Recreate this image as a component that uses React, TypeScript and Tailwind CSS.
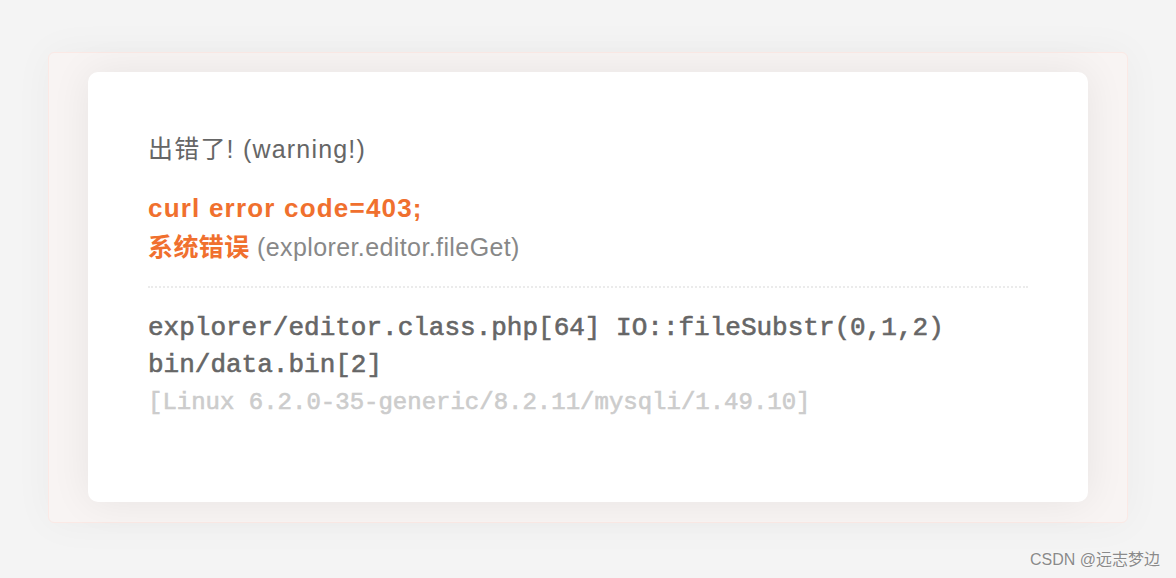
import React from "react";

export default function App() {
  const sans = { fontFamily: '"Liberation Sans", "Noto Sans CJK SC", sans-serif' };
  return (
    <div className="w-[1176px] h-[578px] bg-[#f4f4f4] relative overflow-hidden" style={sans}>
      <div className="pt-[52px] px-[48px]">
        <div className="h-[471px] rounded-[6px] border border-[#fbe9e5] bg-[#f8f4f3] px-[39px] pt-[19px] shadow-[0_0_40px_rgba(0,0,0,0.04)]">
          <div className="h-[430px] rounded-[10px] bg-white shadow-[0_0_40px_rgba(0,0,0,0.07)] px-[60px] pt-[61px]">
            <div className="text-[25px] leading-[32px] text-[#666] tracking-[1.2px]">出错了! (warning!)</div>
            <div className="mt-[23px] text-[26px] leading-[40px] font-bold text-[#f0702e] tracking-[1.2px]">curl error code=403;</div>
            <div className="text-[25px] leading-[38px] tracking-[0.4px]">
              <span className="font-bold text-[#f0702e]">系统错误</span>
              <span className="text-[#888]"> (explorer.editor.fileGet)</span>
            </div>
            <div className="mt-[20px] border-t-2 border-dotted border-[#ebebeb]" />
            <div
              className="mt-[22px] leading-[37px] font-normal"
              style={{ fontFamily: '"Liberation Mono", "Courier New", monospace' }}
            >
              <div className="text-[26px] text-[#666] [-webkit-text-stroke:0.6px_#666]">explorer/editor.class.php[64] IO::fileSubstr(0,1,2)</div>
              <div className="text-[26px] text-[#666] [-webkit-text-stroke:0.6px_#666]">bin/data.bin[2]</div>
              <div className="text-[24px] text-[#cccccc] [-webkit-text-stroke:0.6px_#cccccc]">[Linux 6.2.0-35-generic/8.2.11/mysqli/1.49.10]</div>
            </div>
          </div>
        </div>
      </div>
      <div className="absolute right-[16px] bottom-[6px] text-[16px] text-[#8a8a8a] [text-shadow:0_0_2px_#fff]">CSDN @远志梦边</div>
    </div>
  );
}
